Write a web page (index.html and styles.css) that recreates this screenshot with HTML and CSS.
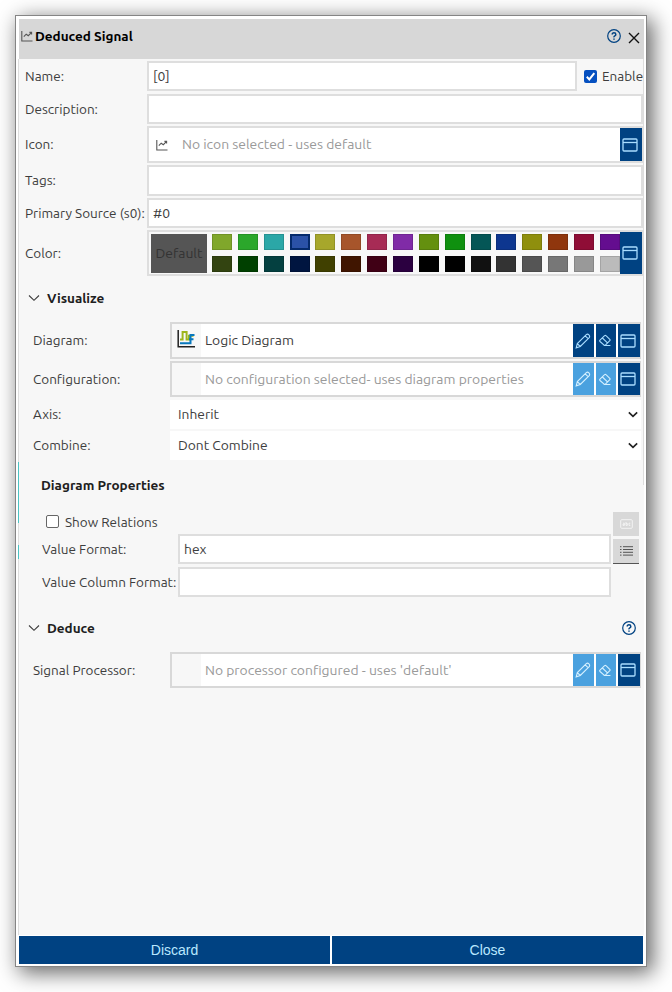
FILE: index.html
```html
<!DOCTYPE html>
<html lang="en">
<head>
<meta charset="utf-8">
<title>Deduced Signal</title>
<link rel="stylesheet" href="styles.css">
</head>
<body>
<svg class="defs" aria-hidden="true">
  <symbol id="chart" viewBox="0 0 12 12"><path d="M.8 1v10H11.5M2.8 6.7 5.2 4.2 7.3 5.7 10.4 2.6M8.4 2.4h2.2v2"/></symbol>
  <symbol id="window" viewBox="0 0 16 14"><rect x="1" y="1" width="14" height="12" rx="1"/><path d="M1 4.5h14"/></symbol>
  <symbol id="pencil" viewBox="0 0 16 16"><path d="M1.2 14.8 2.3 10.6 11.3 1.6Q12.6.5 13.9 1.9T14.2 4.6L5.3 13.5ZM2.3 10.6 5.3 13.5M10.2 2.8 13.1 5.7"/></symbol>
  <symbol id="eraser" viewBox="0 0 14 13"><path d="M6.4 11.4 2 7.5Q1.3 6.8 2 6.1L6.6 1.7Q7.3 1 8 1.7L11.8 5.3Q12.5 6 11.8 6.7L7.2 11.3ZM4.4 4 9.5 8.9M5.7 11.5H12.4"/></symbol>
  <symbol id="help" viewBox="0 0 14 14"><circle cx="7" cy="7" r="6.3"/><path class="heavy" d="M5.2 5.5Q5.2 3.8 7 3.8T8.8 5.4Q8.8 6.4 7.8 6.9T7 8.4M7 9.6v1.2"/></symbol>
  <symbol id="down" viewBox="0 0 12 8"><path d="M1 1.5 6 6.3 11 1.5"/></symbol>
</svg>
<main class="dialog">
  <header class="titlebar">
    <svg class="icon chart"><use href="#chart"/></svg>
    <h1>Deduced Signal</h1>
    <svg class="icon help"><use href="#help"/></svg>
    <svg class="icon close" viewBox="0 0 12 12"><path d="M1 1 11 11M11 1 1 11"/></svg>
  </header>

  <div class="content">
    <section class="general">
      <div class="row name"><label>Name:</label><div class="field">[0]</div>
        <div class="enable"><span class="check on"><svg viewBox="0 0 13 13"><path d="M2.8 6.8 5.3 9.4 10.3 3.2"/></svg></span><span>Enable</span></div></div>
      <div class="row description"><label>Description:</label><div class="field"></div></div>
      <div class="row symbol"><label>Icon:</label><div class="field picker">
        <svg class="icon chart"><use href="#chart"/></svg><span class="hint">No icon selected - uses default</span>
        <button class="act"><svg class="icon win"><use href="#window"/></svg></button></div></div>
      <div class="row tags"><label>Tags:</label><div class="field"></div></div>
      <div class="row source"><label>Primary Source (s0):</label><div class="field">#0</div></div>
      <div class="row color"><label>Color:</label><div class="field palette">
        <div class="default">Default</div>
        <div class="swatches" id="swatches"></div>
        <button class="act"><svg class="icon win"><use href="#window"/></svg></button></div></div>
    </section>

    <div class="section-head visualize"><svg class="icon down"><use href="#down"/></svg><h2>Visualize</h2></div>
    <section class="group">
      <div class="row diagram"><label>Diagram:</label><div class="field combo">
        <div class="thumb"><svg class="logic" viewBox="0 0 18 18"><path class="axis" d="M1.2 0V16.8H18"/><path class="green" d="M3 9.6H5.6V2H9.6V9.6H12V5.8H16.5"/><path class="blue" d="M3 13.2H13.5V5H17.5M12 9.3H16.5"/></svg></div>
        <span class="value">Logic Diagram</span>
        <button class="act"><svg class="icon pencil"><use href="#pencil"/></svg></button><button class="act erase"><svg class="icon eraser"><use href="#eraser"/></svg></button><button class="act wide"><svg class="icon win"><use href="#window"/></svg></button></div></div>
      <div class="row configuration"><label>Configuration:</label><div class="field combo">
        <div class="thumb"></div><span class="value hint">No configuration selected- uses diagram properties</span>
        <button class="act off"><svg class="icon pencil"><use href="#pencil"/></svg></button><button class="act off erase"><svg class="icon eraser"><use href="#eraser"/></svg></button><button class="act wide"><svg class="icon win"><use href="#window"/></svg></button></div></div>
      <div class="row axis-row"><label>Axis:</label><div class="select"><span>Inherit</span><svg class="icon caret"><use href="#down"/></svg></div></div>
      <div class="row combine"><label>Combine:</label><div class="select"><span>Dont Combine</span><svg class="icon caret"><use href="#down"/></svg></div></div>
    </section>

    <h2 class="properties-title">Diagram Properties</h2>
    <section class="properties">
      <div class="property-fields">
        <div class="relations"><span class="check"></span><span>Show Relations</span></div>
        <div class="row format"><label>Value Format:</label><div class="field">hex</div></div>
        <div class="row column"><label>Value Column Format:</label><div class="field"></div></div>
      </div>
      <div class="modes">
        <button class="mode dim"><svg viewBox="0 0 13 10"><rect x=".7" y=".7" width="11.6" height="8.6" rx="1"/><path d="M3 4.2h1.4v2.2H3V5.2h1M6 3v3.4h1.3V4.5H6M10.3 4.2H9v2.2h1.3"/></svg></button>
        <button class="mode list"><svg viewBox="0 0 13 10"><path d="M0 .7h1.5M0 3.5h1.5M0 6.3h1.5M0 9.1h1.5M3 .7h10M3 3.5h10M3 6.3h10M3 9.1h10"/></svg></button>
      </div>
    </section>

    <div class="section-head deduce"><svg class="icon down"><use href="#down"/></svg><h2>Deduce</h2><svg class="icon help"><use href="#help"/></svg></div>
    <section class="group">
      <div class="row processor"><label>Signal Processor:</label><div class="field combo">
        <div class="thumb"></div><span class="value hint">No processor configured - uses 'default'</span>
        <button class="act off"><svg class="icon pencil"><use href="#pencil"/></svg></button><button class="act off erase"><svg class="icon eraser"><use href="#eraser"/></svg></button><button class="act wide"><svg class="icon win"><use href="#window"/></svg></button></div></div>
    </section>
  </div>
  <footer><button>Discard</button><button>Close</button></footer>
</main>
<script src="palette.js"></script>
</body>
</html>
```
FILE: palette.js
```js
const colors = [
  "#80a72b", "#2ba72b", "#2ba7a7", "#2b52a7", "#a7a72b", "#a7552b", "#a72b55", "#802ba7",
  "#64900f", "#0f900f", "#045656", "#0d368f", "#8f8f0d", "#8f360d", "#8f0d36", "#640d8f",
  "#334411", "#004000", "#044040", "#001540", "#404000", "#401500", "#400015", "#2b0040",
  "#000000", "#000000", "#111111", "#333333", "#555555", "#777777", "#999999", "#bbbbbb"
];
const grid = document.getElementById("swatches");
colors.forEach((color, i) => {
  const cell = document.createElement("span");
  cell.className = i === 3 ? "swatch selected" : "swatch";
  cell.style.backgroundColor = color;
  grid.append(cell);
});
```
FILE: styles.css
```css
* { box-sizing: border-box; }
body { margin: 0; height: 992px; padding: 15px 0 0 15px; background: #fff; color: #3d3d3d; font: 13.5px/18px Ubuntu, "Noto Sans", sans-serif; overflow: hidden; }
.defs { position: absolute; width: 0; height: 0; }
button { border: 0; padding: 0; margin: 0; font: inherit; }
h1, h2 { margin: 0; color: #202020; font-size: 13.5px; line-height: 18px; font-weight: 700; }
h1 { color: #000; }
.icon { display: block; flex: none; fill: none; stroke: currentColor; stroke-width: 1.1; }
.heavy { stroke-width: 1.5; }

.dialog { display: flex; flex-direction: column; width: 632px; height: 952px; padding: 3px 2px 2px 3px; border: 1px solid #858585; background: #fff; box-shadow: 5px 5px 20px 1px rgba(0, 0, 0, .6); }
.titlebar { display: flex; align-items: center; flex: none; height: 40px; padding: 0 4px 6px 2px; background: #d7d7d7; }
.chart { width: 12px; height: 12px; color: #555; }
.titlebar h1 { flex: 1; margin-left: 2px; }
.help { width: 14px; height: 14px; color: #004282; stroke-width: 1.2; }
.close { width: 12px; height: 12px; margin: 3px 0 0 7px; color: #111; stroke-width: 1.4; }

.content { flex: 1; min-height: 0; padding-top: 2px; border-left: 1px solid #ddd; border-image: linear-gradient(#ddd 403px, #4cc4c4 403px 464px, #ddd 464px 486px, #4cc4c4 486px 500px, #ddd 500px) 1; border-width: 0 0 0 1px; background: linear-gradient(#ddd, #ddd) right top / 1px 426px no-repeat, #f7f7f7; overflow: hidden; margin-left: -1px; padding-left: 1px; }
.row { display: flex; align-items: center; white-space: nowrap; }
label { flex: none; padding-bottom: 1px; }
.field { flex: 1; min-width: 0; height: 100%; display: flex; align-items: center; border: 2px solid #dedede; background: #fff; padding-left: 4px; font-size: 13.9px; }
.general label { width: 127px; padding-left: 5px; }
.general .row { padding-right: 1px; }
.name { height: 30px; }
.name .field { flex: none; width: 430px; }
.name label { padding-bottom: 0; }
.enable { display: flex; align-items: center; margin-left: 7px; gap: 5px; }
.check { width: 13px; height: 13px; flex: none; border: 1px solid #666; border-radius: 2px; background: #fff; }
.check.on { background: #0550c0; border: 0; }
.check svg { display: block; fill: none; stroke: #fff; stroke-width: 2; }
.description { height: 30px; margin-top: 3px; }
.symbol { height: 37px; margin-top: 2px; }
.tags { height: 31px; margin-top: 2px; }
.source { height: 30px; margin-top: 2px; }
.color { height: 46px; margin-top: 2px; }
.picker .chart { margin-left: 3px; }
.hint { color: #999; }
.picker .hint { margin-left: 14px; flex: 1; padding-bottom: 1px; }
.act { flex: none; display: flex; align-items: center; justify-content: center; width: 21px; height: 100%; background: #004282; color: #a9ddff; }
.act.off { background: #4aa1df; color: #d5f0ff; }
.picker .act, .palette .act { width: 22px; margin-right: -1px; }
.win { width: 16px; height: 14px; margin-right: 2px; stroke-width: 1.3; }
.pencil { width: 16px; height: 16px; margin-right: 2px; }
.eraser { width: 14px; height: 13px; margin-right: 2px; }
.palette { padding-left: 2px; background: #f8f8f8; }
.default { flex: none; width: 56px; height: 39px; display: flex; align-items: center; justify-content: center; background: #555; color: #333; }
.swatches { flex: 1; min-width: 0; display: grid; grid-template-columns: repeat(16, 20px); grid-template-rows: 16px 16px; gap: 6px 5.87px; margin: 0 0 2px 5px; overflow: hidden; align-self: end; }
.swatch { border: 1px solid rgba(0, 0, 0, .12); }
.swatch.selected { border: 2px solid #052b6b; }

.section-head { display: flex; align-items: center; height: 20px; padding: 0 8px 0 8px; }
.visualize { margin-top: 12px; }
.down { width: 12px; height: 8px; }
.section-head h2 { flex: 1; margin-left: 7px; }
.group { margin: 14px 3px 0 13px; }
.group label { width: 137px; }
.combo { padding: 0; border-color: #d8d8d8; }
.thumb { width: 29px; height: 100%; background: #f7f7f7; padding: 6px 0 0 5px; }
.logic { display: block; width: 18px; height: 18px; fill: none; }
.logic .axis { stroke: #222; stroke-width: 1.5; }
.logic .green { stroke: #9db51b; stroke-width: 2; }
.logic .blue { stroke: #0878bd; stroke-width: 2; }
.value { flex: 1; padding: 0 0 1px 4px; }
.combo .act { margin-left: 2px; }
.combo .act.erase { width: 20px; }
.combo .act.wide { width: 22px; margin-right: -1px; }
.diagram { height: 37px; }
.configuration { height: 36px; margin-top: 2px; }
.configuration .value { padding-bottom: 0; }
.axis-row { height: 29px; margin-top: 3px; }
.combine { height: 29px; margin-top: 2px; }
.select { flex: 1; height: 100%; display: flex; align-items: center; justify-content: space-between; padding: 0 3px 1px 8px; background: #fff; font-size: 13.8px; }
.caret { width: 10px; height: 7px; margin-top: 1px; stroke-width: 2; color: #222; }

.properties-title { margin: 16px 0 0 21px; }
.properties { display: flex; margin: 18px 4px 0 22px; gap: 2px; }
.property-fields { width: 569px; flex: none; }
.relations { display: flex; align-items: center; height: 19px; margin-left: 4px; gap: 6px; }
.properties label { width: 137px; margin-right: -1px; flex: none; }
.format { height: 30px; margin-top: 3px; }
.column { height: 30px; margin-top: 3px; }
.modes { display: grid; grid-template-rows: 24px 25px; gap: 3px; width: 26px; align-self: start; }
.mode { display: flex; align-items: center; justify-content: center; background: #d8d8d8; }
.mode svg { width: 13px; height: 10px; fill: none; stroke: #555; }
.mode.dim svg { stroke: #f3f3f3; }
.mode.list { border-bottom: 1px solid #555; }
.deduce { margin-top: 21px; }
.processor { height: 36px; }

footer { display: grid; flex: none; grid-template-columns: 311px 311px; gap: 2px; height: 29px; padding-top: 1px; }
footer button { background: #004282; color: #b9e8ff; font: 14px/28px "Liberation Sans", sans-serif; }
```
